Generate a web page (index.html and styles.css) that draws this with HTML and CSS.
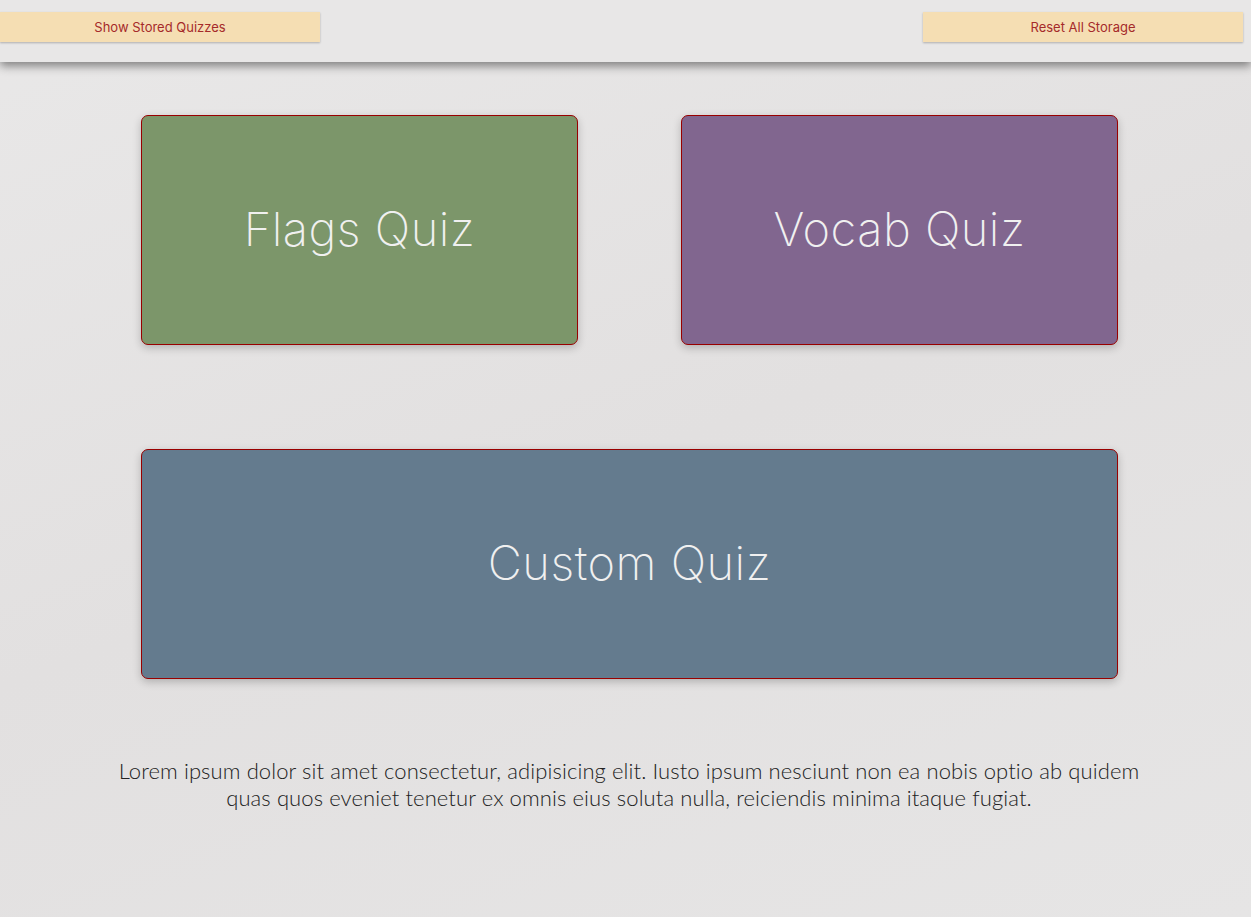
FILE: index.html
```html
<!DOCTYPE html>
<html>
<head>
<meta charset="utf-8">
<link rel="stylesheet" href="styles.css">
</head>
<body>
<header class="topbar">
  <button class="btn">Show Stored Quizzes</button>
  <button class="btn">Reset All Storage</button>
</header>
<main class="main">
  <div class="grid">
    <div class="card card-flags">Flags Quiz</div>
    <div class="card card-vocab">Vocab Quiz</div>
    <div class="card card-custom">Custom Quiz</div>
  </div>
  <p class="lorem">Lorem ipsum dolor sit amet consectetur, adipisicing elit. Iusto ipsum nesciunt non ea nobis optio ab quidem quas quos eveniet tenetur ex omnis eius soluta nulla, reiciendis minima itaque fugiat.</p>
</main>
</body>
</html>
```

FILE: styles.css
```css
html, body {
  margin: 0;
  padding: 0;
}
body {
  width: 1251px;
  height: 917px;
  overflow: hidden;
  background: linear-gradient(160deg, #e9e8e8 0%, #e2e0e0 50%, #e6e5e5 100%);
  font-family: "Lato", "Liberation Sans", sans-serif;
}
.topbar {
  height: 62px;
  box-sizing: border-box;
  padding: 12px 8px 0 0;
  display: flex;
  justify-content: space-between;
  align-items: flex-start;
  background: #e8e7e7;
  box-shadow: 0 4px 9px rgba(0,0,0,0.45);
  position: relative;
  z-index: 1;
}
.btn {
  width: 320px;
  height: 30px;
  border: none;
  background: #f5deb3;
  color: #a52a2a;
  font-family: "Inter", "Liberation Sans", sans-serif;
  font-size: 13px;
  box-shadow: 0 1px 2px rgba(0,0,0,0.25);
  padding: 0 0 1px 0;
  cursor: pointer;
}
.main {
  padding: 53px 0 0 141px;
}
.grid {
  width: 977px;
  display: grid;
  grid-template-columns: 437px 437px;
  column-gap: 103px;
  row-gap: 104px;
}
.card {
  height: 230px;
  box-sizing: border-box;
  border: 1px solid #990000;
  border-radius: 7px;
  display: flex;
  align-items: center;
  justify-content: center;
  padding-bottom: 3px;
  color: #f0f0f0;
  font-family: "Inter", "Lato", sans-serif;
  font-weight: 200;
  font-size: 47px;
  letter-spacing: 0.5px;
  box-shadow: 0 3px 8px rgba(0,0,0,0.22);
}
.card-flags { background: #7c966a; }
.card-vocab { background: #81668f; }
.card-custom {
  grid-column: 1 / 3;
  background: #647b8e;
}
.lorem {
  width: 1040px;
  margin: 78px 0 0 -32px;
  text-align: center;
  font-family: "Lato", sans-serif;
  font-weight: 300;
  font-size: 22px;
  letter-spacing: 0.1px;
  line-height: 27px;
  color: #222222;
}
```
